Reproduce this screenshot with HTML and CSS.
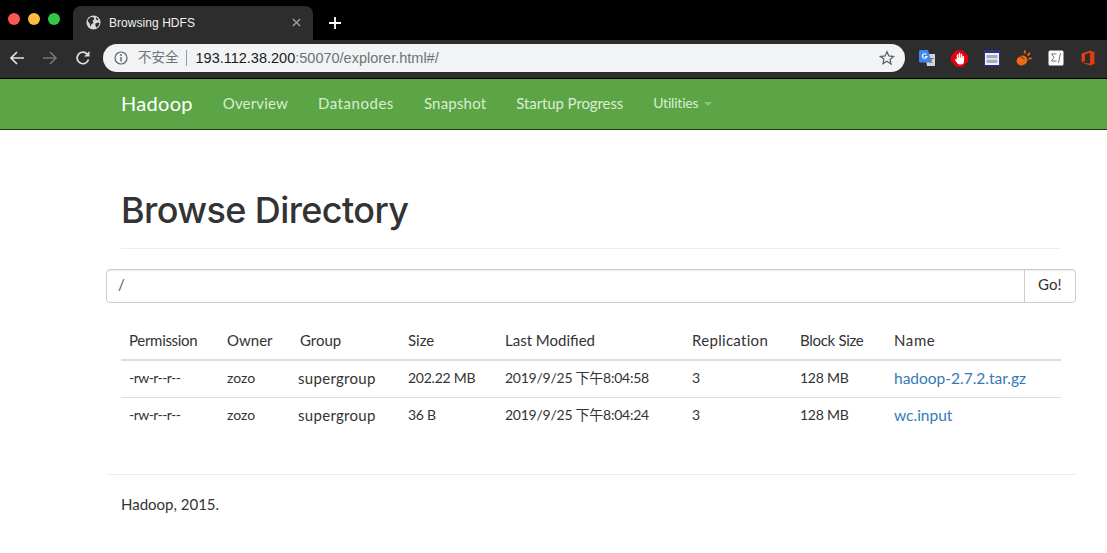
FILE: index.html
```html
<!DOCTYPE html>
<html lang="en">
<head>
  <meta charset="UTF-8">
  <title>Browsing HDFS</title>
  <link rel="stylesheet" href="styles.css">
</head>
<body>
  <div class="tabstrip">
    <div class="lights">
      <span class="light red"></span>
      <span class="light yellow"></span>
      <span class="light green"></span>
    </div>
    <div class="tab">
      <svg class="globe" viewBox="0 0 16 16" width="15" height="15">
        <circle cx="8" cy="8" r="7.5" fill="#d8d8d8"/>
        <path d="M2 5l3-3 3 .5 1 2-2 1.5 1 2.5-2 1-1.5 3L4 9 2 7zM10 9l3-1 1.5 1-1.5 3-2 1.5-1-2.5zM10.5 2.5l2 1 .5 2-2-.5z" fill="#2d2d2d"/>
      </svg>
      <span class="tab-title">Browsing HDFS</span>
      <svg class="tab-close" viewBox="0 0 10 10" width="9" height="9">
        <path d="M1 1l8 8M9 1l-8 8" stroke="#a0a0a0" stroke-width="1.5"/>
      </svg>
    </div>
    <svg class="newtab" viewBox="0 0 12 12" width="12" height="12">
      <path d="M6 0v12M0 6h12" stroke="#fff" stroke-width="1.8"/>
    </svg>
  </div>

  <div class="toolbar">
    <svg class="tool-btn" viewBox="0 0 16 16" width="16" height="16">
      <path d="M15 8H2M8 2L2 8l6 6" fill="none" stroke="#e0e0e0" stroke-width="1.7"/>
    </svg>
    <svg class="tool-btn" viewBox="0 0 16 16" width="16" height="16">
      <path d="M1 8h13M8 2l6 6-6 6" fill="none" stroke="#757575" stroke-width="1.7"/>
    </svg>
    <svg class="tool-btn" viewBox="0 0 16 16" width="16" height="16">
      <path d="M13.5 9.5A5.8 5.8 0 1 1 12.2 4" fill="none" stroke="#e0e0e0" stroke-width="1.7"/>
      <path d="M14.5 1v5.5H9z" fill="#e0e0e0"/>
    </svg>
    <div class="omnibox">
      <svg class="info" viewBox="0 0 14 14" width="14" height="14">
        <circle cx="7" cy="7" r="6" fill="none" stroke="#5f6368" stroke-width="1.2"/>
        <path d="M7 6v4.5" stroke="#5f6368" stroke-width="1.4"/>
        <circle cx="7" cy="4" r=".9" fill="#5f6368"/>
      </svg>
      <span class="insecure">不安全</span>
      <span class="url"><span class="host">193.112.38.200</span>:50070/explorer.html#/</span>
      <svg class="star" viewBox="0 0 16 16" width="16" height="16">
        <path d="M8 1.8l1.9 4.2 4.6.5-3.4 3.1.9 4.5L8 11.3l-4 2.3.9-4.5L1.5 6.5l4.6-.5z" fill="none" stroke="#5f6368" stroke-width="1.3"/>
      </svg>
    </div>
    <div class="extensions">
      <svg viewBox="0 0 16 16" width="16" height="16">
        <path d="M6 4h10v12H8z" fill="#d4d4d4"/>
        <path d="M0 1.5A1.5 1.5 0 0 1 1.5 0H9l3.5 12.5H1.5A1.5 1.5 0 0 1 0 11z" fill="#4285f4"/>
        <path d="M7.5 4.5A2.3 2.3 0 1 0 8 6.5H5.8" fill="none" stroke="#fff" stroke-width="1.1"/>
        <path d="M10 8.5h4.5M12.5 8.5c0 2-1 3.5-2 4.5M11 10.500l2.500 2.500" fill="none" stroke="#6f6f6f" stroke-width="1"/>
      </svg>
      <svg viewBox="0 0 17 17" width="17" height="17">
        <path d="M5.5 0h6L17 5.5v6L11.5 17h-6L0 11.5v-6z" fill="#e3000f"/>
        <path d="M6.5 9V5M8.5 9V3.5M10.5 9V4.5M12.3 10V6.5" stroke="#fff" stroke-width="1.5" stroke-linecap="round"/>
        <path d="M5.8 8H13v3.5c0 1.800-1.300 3-3 3H8.500c-1.200 0-2-.7-2.600-1.700L3.800 9.800l.9-.8 1.100 1z" fill="#fff"/>
      </svg>
      <svg viewBox="0 0 16 16" width="16" height="16">
        <path d="M0 0h16v16H0z" fill="#2b3486"/>
        <path d="M1 3h14v12H1z" fill="#eef0f6"/>
        <path d="M2.5 5h11v3.3h-11zM2.5 9.7h11V13h-11z" fill="#a8aabf"/>
      </svg>
      <svg viewBox="0 0 16 16" width="16" height="16">
        <ellipse cx="6" cy="10.5" rx="5.5" ry="4.8" transform="rotate(-25 6 10.5)" fill="#f26a12"/>
        <path d="M3 6l5.5 3" stroke="#2d2d2d" stroke-width=".8"/>
        <path d="M8.5 3.5L9 .5M11.5 5.5L14 3M12.5 9l3-.8" stroke="#f26a12" stroke-width="1.8"/>
      </svg>
      <svg viewBox="0 0 16 16" width="16" height="16">
        <rect x=".5" y=".5" width="15" height="15" rx="1.5" fill="#fff"/>
        <path d="M8.5 4h-5L6 7.5 3.5 11h5M12.5 3l-2 10" fill="none" stroke="#777" stroke-width="1"/>
      </svg>
      <svg viewBox="0 0 16 16" width="16" height="16">
        <path d="M1.5 3.5L10 .5 14.5 2v12L10 15.5l-8.500-3 8.500 1V3L5 4.200V11l-3.500 1.500z" fill="#dc3e15"/>
      </svg>
    </div>
  </div>

  <nav class="navbar">
    <div class="nav-inner">
      <a class="brand">Hadoop</a>
      <a class="nav-link nl-overview">Overview</a>
      <a class="nav-link nl-datanodes">Datanodes</a>
      <a class="nav-link nl-snapshot">Snapshot</a>
      <a class="nav-link nl-startup">Startup Progress</a>
      <a class="nav-link nl-utilities">Utilities <span class="caret"></span></a>
    </div>
  </nav>

  <div class="container">
    <div class="page-header">
      <h1>Browse Directory</h1>
    </div>

    <div class="input-group">
      <div class="path-input">/</div>
      <div class="go-btn">Go!</div>
    </div>

    <table class="listing">
      <thead>
        <tr>
          <th class="c-perm">Permission</th>
          <th class="c-owner">Owner</th>
          <th class="c-group">Group</th>
          <th class="c-size">Size</th>
          <th class="c-date">Last Modified</th>
          <th class="c-rep">Replication</th>
          <th class="c-block">Block Size</th>
          <th class="c-name">Name</th>
        </tr>
      </thead>
      <tbody>
        <tr>
          <td class="mode">-rw-r--r--</td>
          <td>zozo</td>
          <td class="group">supergroup</td>
          <td class="num">202.22 MB</td>
          <td class="num">2019/9/25 下午8:04:58</td>
          <td>3</td>
          <td class="num">128 MB</td>
          <td><a class="file-link">hadoop-2.7.2.tar.gz</a></td>
        </tr>
        <tr>
          <td class="mode">-rw-r--r--</td>
          <td>zozo</td>
          <td class="group">supergroup</td>
          <td class="num">36 B</td>
          <td class="num">2019/9/25 下午8:04:24</td>
          <td>3</td>
          <td class="num">128 MB</td>
          <td><a class="file-link">wc.input</a></td>
        </tr>
      </tbody>
    </table>

    <hr class="foot-rule">
    <p class="footer">Hadoop, 2015.</p>
  </div>
</body>
</html>
```

FILE: styles.css
```css
* {
  box-sizing: border-box;
}

html, body {
  height: 100%;
}

body {
  margin: 0;
  background: #fff;
  color: #333;
  font-family: Lato, "Noto Sans CJK SC", sans-serif;
  font-size: 14px;
  overflow: hidden;
}

/* browser chrome */
.tabstrip {
  height: 40px;
  background: #000;
  display: flex;
  align-items: flex-end;
}

.lights {
  width: 73px;
  height: 40px;
  padding: 13px 0 0 8px;
  display: flex;
  gap: 8px;
}

.light {
  width: 12px;
  height: 12px;
  border-radius: 50%;
}

.red { background: #fc5753; }
.yellow { background: #fdbc40; }
.green { background: #33c748; }

.tab {
  width: 240px;
  height: 34px;
  background: #2d2d2d;
  border-radius: 8px 8px 0 0;
  display: flex;
  align-items: center;
  padding: 0 12px 1px 13px;
  color: #f0f0f0;
  font-family: "Liberation Sans", sans-serif;
  font-size: 12px;
}

.tab-title {
  margin-left: 8px;
  flex: 1;
  letter-spacing: .05px;
}

.newtab {
  margin: 0 0 11px 16px;
}

.toolbar {
  height: 39px;
  background: #2d2d2d;
  border-bottom: 1px solid #000;
  display: flex;
  align-items: center;
  padding: 0 0 2px 9px;
}

.tool-btn {
  margin-right: 17px;
  flex: none;
}

.omnibox {
  width: 802px;
  height: 28px;
  margin-left: -5px;
  background: #f1f3f4;
  border-radius: 14px;
  display: flex;
  align-items: center;
  padding: 0 10px 0 11px;
  font-family: "Liberation Sans", "Noto Sans CJK SC", sans-serif;
  font-size: 14.5px;
  color: #6f7377;
}

.insecure {
  margin-left: 10px;
  padding-right: 7px;
  font-size: 13.5px;
  border-right: 1px solid #9a9a9a;
  line-height: 16px;
}

.url {
  margin-left: 9px;
  flex: 1;
}

.host {
  color: #1b1b1b;
}

.extensions {
  display: flex;
  gap: 16px;
  margin-left: 14px;
}

/* page navbar */
.navbar {
  height: 51px;
  background: #5ca546;
  border-bottom: 1px solid #1d3a14;
}

.nav-inner {
  display: flex;
  align-items: center;
  height: 47px;
  padding-left: 121px;
  gap: 30px;
}

.brand {
  color: #fff;
  font-size: 20px;
  letter-spacing: .3px;
}

.nav-link {
  color: #d9edd2;
  font-size: 15px;
}

.nl-overview { letter-spacing: .15px; }
.nl-datanodes { letter-spacing: .55px; }
.nl-snapshot { letter-spacing: .2px; }
.nl-startup { letter-spacing: -.1px; }
.nl-utilities { font-size: 14px; letter-spacing: -.2px; }

.caret {
  display: inline-block;
  width: 0;
  height: 0;
  margin-left: 2px;
  vertical-align: middle;
  border-top: 4px solid #8fc080;
  border-left: 4px solid transparent;
  border-right: 4px solid transparent;
}

/* content */
.container {
  width: 970px;
  margin-left: 106px;
}

.page-header {
  height: 79px;
  margin: 40px 15px 20px;
  padding-top: 20px;
  border-bottom: 1px solid #eee;
}

h1 {
  margin: 0;
  font-family: Inter, "Liberation Sans", sans-serif;
  font-size: 36px;
  font-weight: 500;
  line-height: 40px;
  letter-spacing: -.6px;
  color: #333;
}

.input-group {
  display: flex;
  height: 34px;
  border: 1px solid #ccc;
  border-radius: 4px;
  box-shadow: inset 0 1px 1px rgba(0, 0, 0, .075);
}

.path-input {
  flex: 1;
  padding: 4px 11px;
  line-height: 20px;
  color: #555;
  font-size: 15px;
}

.go-btn {
  width: 51px;
  border-left: 1px solid #ccc;
  padding: 4px 0 0 13px;
  line-height: 20px;
  font-size: 15px;
  letter-spacing: .1px;
}

.listing {
  width: 940px;
  margin: 19px 15px 0;
  border-collapse: collapse;
}

th, td {
  text-align: left;
  font-weight: 400;
  vertical-align: top;
  white-space: nowrap;
  line-height: 20px;
}

th {
  height: 38px;
  padding: 8px;
  border-bottom: 2px solid #ddd;
  font-size: 15px;
}

td {
  height: 37px;
  padding: 7px 8px 0;
  border-bottom: 1px solid #ddd;
}

tbody tr:last-child td {
  border-bottom: none;
}

.mode { letter-spacing: -.55px; }
.num { letter-spacing: -.25px; }
.group { font-size: 15px; letter-spacing: .3px; text-indent: -2px; }

.c-perm { width: 98px; letter-spacing: -.3px; }
.c-owner { width: 73px; }
.c-group { width: 108px; }
.c-size { width: 97px; }
.c-date { width: 187px; }
.c-rep { width: 108px; letter-spacing: .3px; }
.c-block { width: 94px; letter-spacing: -.3px; }
.c-name { letter-spacing: .6px; }

.file-link {
  color: #337ab7;
  font-size: 15.5px;
}

.foot-rule {
  margin: 40px 0 0;
  border: 0;
  border-top: 1px solid #eee;
}

.footer {
  margin: 19px 15px 0;
  line-height: 20px;
  font-size: 15px;
}
```
